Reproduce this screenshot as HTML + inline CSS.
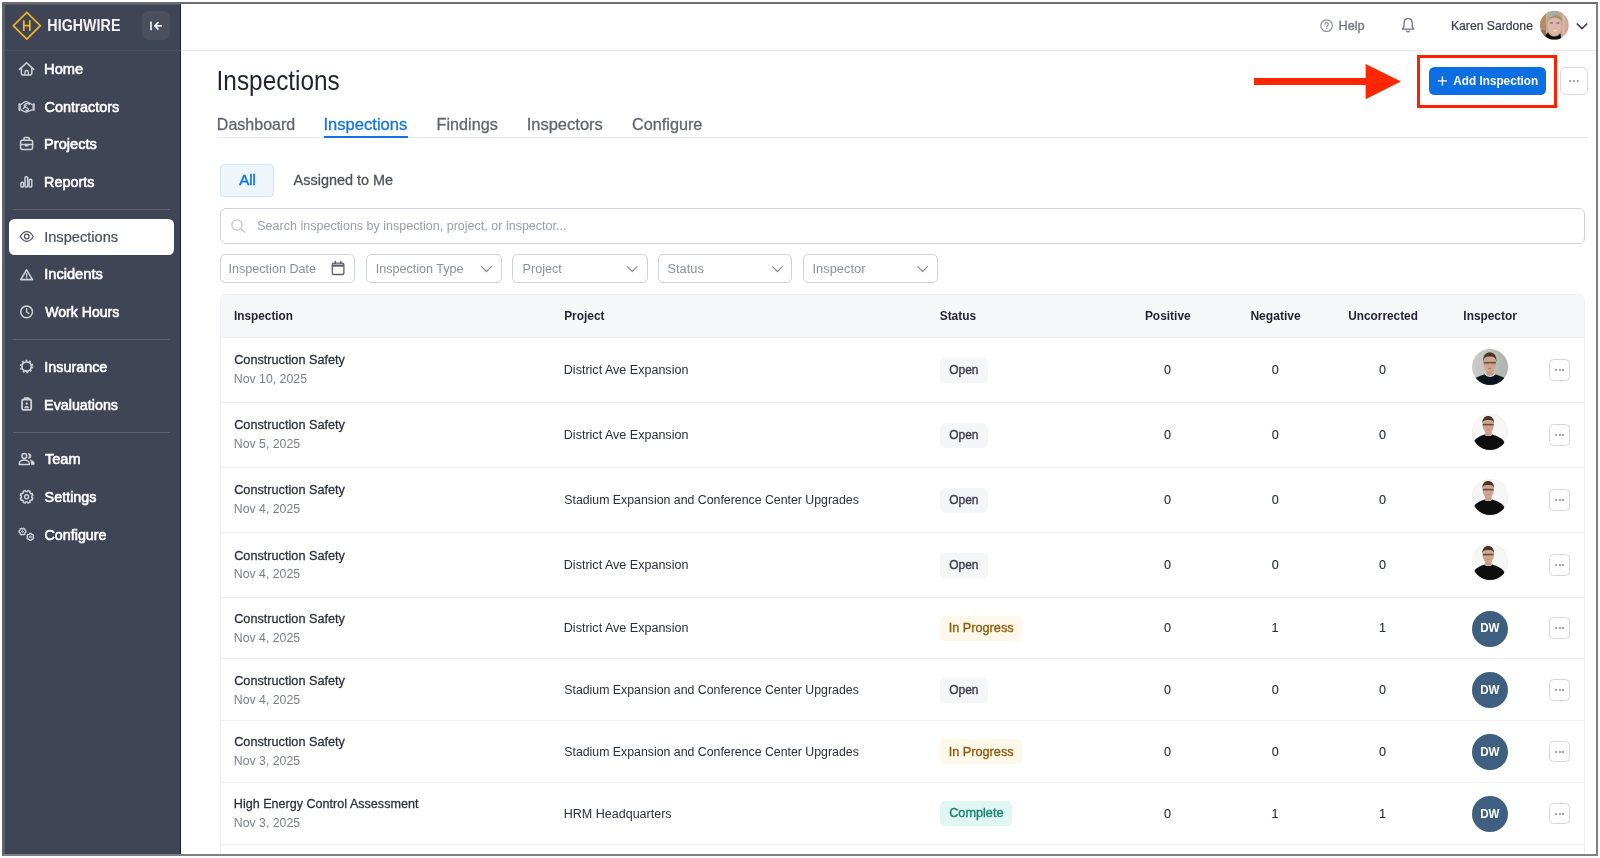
<!DOCTYPE html>
<html><head><meta charset="utf-8"><title>Inspections</title>
<style>
*{box-sizing:border-box;margin:0;padding:0}
html,body{width:1600px;height:858px;overflow:hidden;background:#fff;font-family:"Liberation Sans",sans-serif}
.abs,.t,svg,.rl,.bdg,.mb,.dw,.av{position:absolute}
.t{white-space:nowrap;line-height:1;transform-origin:0 50%}
#frame{left:2px;top:2px;width:1596px;height:854px;border:2px solid #7e7e7e;border-left-color:#636367;border-top-color:#6c6c6e}
#side{left:4px;top:4px;width:177px;height:850px;background:#404556;border-right:1px solid #16213f;border-top:1px solid #555969;border-left:1px solid #555969}
.hl{height:1px;background:#e9eaef}
.sdiv{left:12.5px;width:157.5px;height:1px;background:#5c6070}
.box{border:1px solid #cfd2dc;border-radius:5px;background:#fff}
.rl{left:221px;width:1363.6px;height:1px;background:#f0f1f4}
.bdg{height:25px;border-radius:5px}
.mb{left:1548.7px;width:21.8px;height:21.6px;border:1px solid #d5d8e2;border-radius:4.5px;background:#fff}
.mb i{position:absolute;top:9px;width:2px;height:2px;border-radius:50%;background:#868996}
.mb i:nth-child(1){left:5.5px}.mb i:nth-child(2){left:8.9px}.mb i:nth-child(3){left:12.3px}
.dw{left:1472px;width:36px;height:36px;border-radius:50%;background:#3f5f80}
.av{left:1472px}
svg{overflow:visible}
.si{fill:none;stroke:#cfd1d9;stroke-width:1.35;stroke-linecap:round;stroke-linejoin:round}
</style></head><body>
<!-- main chrome -->
<div class="abs" id="frame"></div>
<div class="abs" id="side"></div>
<div class="abs" style="left:5px;top:50px;width:176px;height:1px;background:#4a4f60"></div>
<div class="abs hl" style="left:181px;top:50px;width:1415px"></div>
<!-- sidebar dividers + active -->
<div class="abs sdiv" style="top:209px"></div>
<div class="abs sdiv" style="top:339px"></div>
<div class="abs sdiv" style="top:431.5px"></div>
<div class="abs" style="left:8.5px;top:218.5px;width:165.5px;height:36.5px;border-radius:5.5px;background:#fff"></div>
<!-- collapse btn -->
<div class="abs" style="left:142px;top:11px;width:28px;height:28.8px;border-radius:6.5px;background:#4b4e5d"></div>
<!-- tabs line -->
<div class="abs" style="left:217px;top:136.6px;width:1371px;height:1.8px;background:#e6e8ed"></div>
<div class="abs" style="left:324px;top:136px;width:83.5px;height:2.4px;background:#1273e6"></div>
<!-- chip -->
<div class="abs" style="left:220.3px;top:164px;width:53.4px;height:33px;border-radius:4px;background:#eef6fc;border:1px solid #d3e6f8"></div>
<!-- search -->
<div class="abs box" style="left:220.3px;top:208.2px;width:1364.4px;height:35.4px;border-radius:6px"></div>
<!-- filters -->
<div class="abs box" style="left:220.2px;top:254.2px;width:135px;height:28.5px"></div>
<div class="abs box" style="left:366px;top:254.2px;width:135.7px;height:28.5px"></div>
<div class="abs box" style="left:512.3px;top:254.2px;width:135.3px;height:28.5px"></div>
<div class="abs box" style="left:658px;top:254.2px;width:134px;height:28.5px"></div>
<div class="abs box" style="left:802.8px;top:254.2px;width:135.2px;height:28.5px"></div>
<!-- table -->
<div class="abs" style="left:220.3px;top:294.4px;width:1364.6px;height:559.6px;border:1px solid #eef0f3;border-bottom:none;border-radius:7px 7px 0 0;background:#fff;overflow:hidden"><div style="height:42.4px;background:#f6f7f9;border-bottom:1px solid #eff0f3"></div></div>
<div class="rl" style="top:401.60px"></div>
<div class="rl" style="top:466.60px"></div>
<div class="rl" style="top:531.60px"></div>
<div class="rl" style="top:596.60px"></div>
<div class="rl" style="top:658.35px"></div>
<div class="rl" style="top:720.10px"></div>
<div class="rl" style="top:781.85px"></div>
<div class="rl" style="top:843.60px"></div>
<div class="bdg" style="left:939.9px;top:357.60px;width:48.2px;background:#f4f5f7"></div>
<div class="mb" style="top:359.00px"><i></i><i></i><i></i></div>
<svg class="av" style="top:348.50px" width="36" height="36" viewBox="0 0 36 36"><defs><clipPath id="cp1"><circle cx="18" cy="18" r="18"/></clipPath><linearGradient id="g1" x1="0" x2="1"><stop offset="0" stop-color="#cbccc7"/><stop offset=".55" stop-color="#bfc1bb"/><stop offset="1" stop-color="#abb2ad"/></linearGradient><filter id="bl1"><feGaussianBlur stdDeviation=".5"/></filter></defs>
<g clip-path="url(#cp1)"><rect width="36" height="36" fill="url(#g1)"/><g filter="url(#bl1)">
<path d="M-2 38 V32 C3 28.5 8 27 13 25.2 C15.5 27.4 20.5 27.4 23 25.2 C28 27 33 28.5 38 32 V38Z" fill="#10151f"/>
<path d="M14.4 19 H21.6 V25 C20 27.2 16 27.2 14.4 25Z" fill="#c9987f"/>
<path d="M13 25 C15.2 28.2 20.8 28.2 23 25" fill="none" stroke="#e3e4e2" stroke-width="1.1"/>
<ellipse cx="17.8" cy="14.8" rx="6.3" ry="8.3" fill="#d3a48d"/>
<path d="M11.2 13.2 C10.6 6.8 13.8 3.2 17.8 3.2 C21.8 3.2 25 6.8 24.4 13.2 C24 9.2 22.3 7.4 17.8 7.6 C13.3 7.4 11.6 9.2 11.2 13.2Z" fill="#4b3425"/>
<path d="M11.6 13.6 H24" stroke="#463c3c" stroke-width="1.5" opacity=".75"/>
<path d="M12.4 14.4 h4.4 M19 14.4 h4.4" stroke="#5b5252" stroke-width="1.6" opacity=".35"/>
<path d="M16.2 19.4 H19.4" stroke="#b0645c" stroke-width=".9" opacity=".8"/>
</g></g>
</svg>
<div class="bdg" style="left:939.9px;top:422.60px;width:48.2px;background:#f4f5f7"></div>
<div class="mb" style="top:424.00px"><i></i><i></i><i></i></div>
<svg class="av" style="top:413.80px" width="36" height="36" viewBox="0 0 36 36"><defs><clipPath id="cp2"><circle cx="18" cy="18" r="18"/></clipPath><filter id="bl2"><feGaussianBlur stdDeviation=".5"/></filter></defs>
<circle cx="18" cy="18" r="18" fill="#e6f1eb"/><g clip-path="url(#cp2)"><circle cx="18" cy="18" r="17.4" fill="#f6f6f4"/><g filter="url(#bl2)">
<path d="M2 38 V28 C3.4 24 8 22.4 12.4 20.6 C14.4 22.6 18.4 22.6 20.4 20.6 C25 22.4 30.4 24 32.2 28 V38Z" fill="#0c0d11"/>
<path d="M13.2 15 H19.6 V20.6 C18.2 22.4 14.6 22.4 13.2 20.6Z" fill="#c79a83"/>
<ellipse cx="16.2" cy="11.4" rx="5.6" ry="7.6" fill="#d0a48e"/>
<path d="M10.4 10.2 C9.8 4.4 12.8 1.9 16.2 1.9 C19.6 1.9 22.6 4.4 22 10.2 C21.6 7 20.2 5.8 16.2 6 C12.2 5.8 10.8 7 10.4 10.2Z" fill="#4d3526"/>
<path d="M10.7 10.6 H21.7" stroke="#3f3838" stroke-width="1.6" opacity=".8"/>
<path d="M14.7 15.4 H17.7" stroke="#b0645c" stroke-width=".8" opacity=".7"/>
</g></g>
</svg>
<div class="bdg" style="left:939.9px;top:487.60px;width:48.2px;background:#f4f5f7"></div>
<div class="mb" style="top:489.00px"><i></i><i></i><i></i></div>
<svg class="av" style="top:478.80px" width="36" height="36" viewBox="0 0 36 36"><defs><clipPath id="cp2"><circle cx="18" cy="18" r="18"/></clipPath><filter id="bl2"><feGaussianBlur stdDeviation=".5"/></filter></defs>
<circle cx="18" cy="18" r="18" fill="#e6f1eb"/><g clip-path="url(#cp2)"><circle cx="18" cy="18" r="17.4" fill="#f6f6f4"/><g filter="url(#bl2)">
<path d="M2 38 V28 C3.4 24 8 22.4 12.4 20.6 C14.4 22.6 18.4 22.6 20.4 20.6 C25 22.4 30.4 24 32.2 28 V38Z" fill="#0c0d11"/>
<path d="M13.2 15 H19.6 V20.6 C18.2 22.4 14.6 22.4 13.2 20.6Z" fill="#c79a83"/>
<ellipse cx="16.2" cy="11.4" rx="5.6" ry="7.6" fill="#d0a48e"/>
<path d="M10.4 10.2 C9.8 4.4 12.8 1.9 16.2 1.9 C19.6 1.9 22.6 4.4 22 10.2 C21.6 7 20.2 5.8 16.2 6 C12.2 5.8 10.8 7 10.4 10.2Z" fill="#4d3526"/>
<path d="M10.7 10.6 H21.7" stroke="#3f3838" stroke-width="1.6" opacity=".8"/>
<path d="M14.7 15.4 H17.7" stroke="#b0645c" stroke-width=".8" opacity=".7"/>
</g></g>
</svg>
<div class="bdg" style="left:939.9px;top:552.60px;width:48.2px;background:#f4f5f7"></div>
<div class="mb" style="top:554.00px"><i></i><i></i><i></i></div>
<svg class="av" style="top:543.80px" width="36" height="36" viewBox="0 0 36 36"><defs><clipPath id="cp2"><circle cx="18" cy="18" r="18"/></clipPath><filter id="bl2"><feGaussianBlur stdDeviation=".5"/></filter></defs>
<circle cx="18" cy="18" r="18" fill="#e6f1eb"/><g clip-path="url(#cp2)"><circle cx="18" cy="18" r="17.4" fill="#f6f6f4"/><g filter="url(#bl2)">
<path d="M2 38 V28 C3.4 24 8 22.4 12.4 20.6 C14.4 22.6 18.4 22.6 20.4 20.6 C25 22.4 30.4 24 32.2 28 V38Z" fill="#0c0d11"/>
<path d="M13.2 15 H19.6 V20.6 C18.2 22.4 14.6 22.4 13.2 20.6Z" fill="#c79a83"/>
<ellipse cx="16.2" cy="11.4" rx="5.6" ry="7.6" fill="#d0a48e"/>
<path d="M10.4 10.2 C9.8 4.4 12.8 1.9 16.2 1.9 C19.6 1.9 22.6 4.4 22 10.2 C21.6 7 20.2 5.8 16.2 6 C12.2 5.8 10.8 7 10.4 10.2Z" fill="#4d3526"/>
<path d="M10.7 10.6 H21.7" stroke="#3f3838" stroke-width="1.6" opacity=".8"/>
<path d="M14.7 15.4 H17.7" stroke="#b0645c" stroke-width=".8" opacity=".7"/>
</g></g>
</svg>
<div class="bdg" style="left:939.9px;top:615.98px;width:82.0px;background:#fef8ea"></div>
<div class="mb" style="top:617.38px"><i></i><i></i><i></i></div>
<div class="dw" style="top:610.58px"></div>
<div class="bdg" style="left:939.9px;top:677.73px;width:48.2px;background:#f4f5f7"></div>
<div class="mb" style="top:679.12px"><i></i><i></i><i></i></div>
<div class="dw" style="top:672.33px"></div>
<div class="bdg" style="left:939.9px;top:739.48px;width:82.0px;background:#fef8ea"></div>
<div class="mb" style="top:740.88px"><i></i><i></i><i></i></div>
<div class="dw" style="top:734.08px"></div>
<div class="bdg" style="left:939.9px;top:801.23px;width:72.3px;background:#e0f6f3"></div>
<div class="mb" style="top:802.62px"><i></i><i></i><i></i></div>
<div class="dw" style="top:795.83px"></div>
<!-- annotation -->
<div class="abs" style="left:1254px;top:78.1px;width:113px;height:7.3px;background:#ff2600"></div>
<svg style="left:0;top:0" width="1600" height="120"><polygon points="1365.6,64 1400.9,81.6 1365.6,99.2" fill="#ff2600"/></svg>
<div class="abs" style="left:1416.7px;top:54.8px;width:140.5px;height:52.9px;border:3.2px solid #ff2000"></div>
<div class="abs" style="left:1429px;top:66.9px;width:116.6px;height:27.9px;border-radius:5.5px;background:#0b6fe3"></div>
<div class="abs" style="left:1560.2px;top:66.6px;width:27.6px;height:28.2px;border-radius:6px;border:1px solid #d5d8e2;background:#fff"></div>
<svg style="left:0;top:0" width="1600" height="858" viewBox="0 0 1600 858">
<g fill="none" stroke="#f0b429" stroke-linejoin="miter">
<path d="M26.8 12.4 L40.3 25.7 L26.8 39 L13.3 25.7 Z" stroke-width="1.7"/>
<path d="M23.8 20.2 V31.1 M29.8 20.2 V31.1 M23.8 25.7 H29.8" stroke-width="1.8"/>
</g>
<g fill="none" stroke="#f0f0f3" stroke-width="1.7" stroke-linecap="round" stroke-linejoin="round"><path d="M151 21.6 V30.3" stroke-linecap="butt"/><path d="M161.2 25.9 H155 M158 22.7 L154.8 25.9 L158 29.1"/></g>
<g class="si">
<path d="M19.5 69.4 L26.6 62.7 L33.7 69.4" stroke-width="1.5"/><path d="M21.4 68.2 V73.4 Q21.4 74.9 22.9 74.9 H30.3 Q31.8 74.9 31.8 73.4 V68.2" stroke-width="1.5"/><path d="M24.9 74.6 V72.2 Q24.9 70.5 26.6 70.5 Q28.3 70.5 28.3 72.2 V74.6" stroke-width="1.3"/>
<rect x="18.4" y="103.3" width="2.4" height="7.7" rx=".9" fill="#c6c8d0" stroke="none"/><rect x="32.4" y="103.3" width="2.4" height="7.7" rx=".9" fill="#c6c8d0" stroke="none"/>
<path d="M21.2 104.4 C22.6 103.6 23.4 101.8 25.8 101.7 C28.6 101.6 30 103.8 32 104.4 M21.2 109.8 C22.4 110.4 23.6 112 26 112 C28.6 112 30.4 110.4 32 109.8" stroke-width="1.3"/>
<path d="M29.4 104.2 C27.6 102.8 24.6 103.6 24.2 105.8 C23.8 108 27 107.4 28 108.6 C29 109.8 27.4 111 25.8 110.2" stroke-width="1.3"/>
<path d="M23.2 108.6 L26.2 105.4" stroke-width="1.2"/>
<rect x="20.6" y="140.2" width="12" height="9.2" rx="1.6" stroke-width="1.55"/><path d="M24 140.2 V138.7 a1.1 1.1 0 0 1 1.1 -1.1 h3 a1.1 1.1 0 0 1 1.1 1.1 V140.2" stroke-width="1.55"/><path d="M20.6 144.4 H32.6" stroke-width="1.5"/><path d="M25.5 144.4 v1.3 h2.4 v-1.3"/>
<rect x="20.9" y="182.3" width="2.7" height="4.8" rx="1.2" stroke-width="1.5"/><rect x="25" y="176.8" width="2.7" height="10.3" rx="1.2" stroke-width="1.5"/><rect x="29.1" y="179.2" width="2.7" height="7.9" rx="1.2" stroke-width="1.5"/>
<path d="M26.6 269.8 L32.5 279.6 H20.7 Z" stroke-width="1.6"/><path d="M26.6 273.6 V276.4"/><path d="M26.6 278 V278.1" stroke-width="1.5"/>
<circle cx="26.6" cy="311.8" r="5.9" stroke-width="1.5"/><path d="M26.6 308.4 V312 L28.8 313.5"/>
<circle cx="26.6" cy="366.5" r="4.7" stroke-width="1.7"/><circle cx="26.6" cy="366.5" r="6" stroke-width="1.5" stroke-dasharray="1.9 1.87" stroke-linecap="butt"/>
<rect x="22.1" y="399.5" width="9.1" height="10.4" rx="1.3" stroke-width="1.8"/><path d="M24.7 399 V398.2 H28.6 V399" stroke-width="1.8"/><circle cx="26.65" cy="403.6" r="1.1" fill="#d9dbe2" stroke="none"/><path d="M24.5 407.7 c0.3 -2 4 -2 4.3 0 z" fill="#d9dbe2" stroke-width="0.6"/>
<circle cx="24.3" cy="456" r="2.4" stroke-width="1.5"/><path d="M19.3 464.4 V463.2 c0 -2.3 3.4 -3.3 5 -3.3 s5 1 5 3.3 v1.2 z" stroke-width="1.5"/>
<path d="M28.6 453.6 a2.4 2.4 0 0 1 0 4.8 a4 4 0 0 0 0 -4.8z M30.8 460.2 c2 .5 3.4 1.5 3.4 3 v1.2 h-2.9 v-1.2 c0 -1.2 -.2 -2.1 -.5 -3z" fill="#d9dbe2" stroke-width="0.8"/>
<path d="M32.85 498.20 L32.00 500.23 L30.89 499.92 L29.72 501.09 L30.03 502.20 L28.00 503.05 L27.43 502.03 L25.77 502.03 L25.20 503.05 L23.17 502.20 L23.48 501.09 L22.31 499.92 L21.20 500.23 L20.35 498.20 L21.37 497.63 L21.37 495.97 L20.35 495.40 L21.20 493.37 L22.31 493.68 L23.48 492.51 L23.17 491.40 L25.20 490.55 L25.77 491.57 L27.43 491.57 L28.00 490.55 L30.03 491.40 L29.72 492.51 L30.89 493.68 L32.00 493.37 L32.85 495.40 L31.83 495.97 L31.83 497.63Z" stroke-width="1.5"/><circle cx="26.6" cy="496.8" r="2" stroke-width="1.4"/>
<path d="M25.91 530.80 L25.91 532.40 L25.26 532.50 L24.66 533.54 L24.90 534.15 L23.51 534.95 L23.10 534.44 L21.90 534.44 L21.49 534.95 L20.10 534.15 L20.34 533.54 L19.74 532.50 L19.09 532.40 L19.09 530.80 L19.74 530.70 L20.34 529.66 L20.10 529.05 L21.49 528.25 L21.90 528.76 L23.10 528.76 L23.51 528.25 L24.90 529.05 L24.66 529.66 L25.26 530.70Z" stroke-width="1.3"/><circle cx="22.5" cy="531.6" r=".9" stroke-width="1"/>
<path d="M33.65 537.91 L32.85 539.30 L32.24 539.06 L31.20 539.66 L31.10 540.31 L29.50 540.31 L29.40 539.66 L28.36 539.06 L27.75 539.30 L26.95 537.91 L27.46 537.50 L27.46 536.30 L26.95 535.89 L27.75 534.50 L28.36 534.74 L29.40 534.14 L29.50 533.49 L31.10 533.49 L31.20 534.14 L32.24 534.74 L32.85 534.50 L33.65 535.89 L33.14 536.30 L33.14 537.50Z" stroke-width="1.3"/><circle cx="30.3" cy="536.9" r=".9" stroke-width="1"/>
</g>
<g fill="none" stroke="#535665" stroke-width="1.3" stroke-linejoin="round"><path d="M20.3 236.5 C22.4 232.8 24.8 231.7 26.75 231.7 C28.7 231.7 31.1 232.8 33.2 236.5 C31.1 240.2 28.7 241.3 26.75 241.3 C24.8 241.3 22.4 240.2 20.3 236.5 Z"/><circle cx="26.75" cy="236.5" r="2.3"/></g>
<circle cx="1326.6" cy="25.6" r="5.8" fill="none" stroke="#8d909c" stroke-width="1.2"/>
<path d="M1325 24.3 c0 -2.2 3.3 -2.2 3.3 -.1 c0 1.3 -1.6 1.4 -1.6 2.7 M1326.7 28.6 v.1" fill="none" stroke="#8d909c" stroke-width="1.15" stroke-linecap="round"/>
<g fill="none" stroke="#6f7280" stroke-width="1.3" stroke-linejoin="round" stroke-linecap="round"><path d="M1408.1 18.7 c-2.6 0 -4.1 2 -4.1 4.5 v3.4 l-1.5 2.5 h11.2 l-1.5 -2.5 v-3.4 c0 -2.5 -1.5 -4.5 -4.1 -4.5 z"/><path d="M1406.7 30.9 a1.5 1.5 0 0 0 2.8 0"/></g>
<defs><clipPath id="cpk"><circle cx="1554.4" cy="25.2" r="14.4"/></clipPath><linearGradient id="gk" x1="0" x2="1"><stop offset="0" stop-color="#b38468"/><stop offset=".19" stop-color="#b88a72"/><stop offset=".215" stop-color="#d2bb78"/><stop offset=".25" stop-color="#c4a98a"/><stop offset=".76" stop-color="#c9a794"/><stop offset=".8" stop-color="#dcbcad"/><stop offset=".9" stop-color="#cfa593"/><stop offset="1" stop-color="#d9b6a6"/></linearGradient><filter id="blk" x="-20%" y="-20%" width="140%" height="140%"><feGaussianBlur stdDeviation=".45"/></filter></defs>
<g clip-path="url(#cpk)"><rect x="1540" y="10" width="29" height="30" fill="url(#gk)"/><g filter="url(#blk)">
<path d="M1540 40 V30 H1546 V40Z" fill="#9c6c52"/>
<path d="M1546.6 32 C1545 17 1549.5 10.6 1555 10.6 C1560.5 10.6 1563.6 16 1562.6 27 L1560 18 L1549 20Z" fill="#b4a98f"/>
<path d="M1548 16 C1549.5 11.5 1553.5 10.4 1556.5 11 L1554 17Z" fill="#9db2b8"/>
<ellipse cx="1554.4" cy="26.2" rx="7" ry="9" fill="#deb7a8"/>
<path d="M1548 21.5 C1550.5 17 1555 15.8 1562 20.5 C1561 14 1552.5 12.5 1548 21.5Z" fill="#a88c62"/>
<path d="M1550 23 H1553 M1556.4 23 H1559.4" stroke="#5e5458" stroke-width="1.2"/>
<path d="M1552.4 30.2 C1553.6 31.7 1556.2 31.7 1557.4 30.2Z" fill="#f1e8e4"/>
<path d="M1544.5 41 C1544.5 36 1546.2 33.2 1548 32.4 C1550.6 37.6 1557.6 37.8 1560.2 33.6 C1561.2 35.5 1561 38 1561 41Z" fill="#0a0b11"/>
</g></g>
<path d="M1577.2 23.9 L1582 28.6 L1586.8 23.9" fill="none" stroke="#41444f" stroke-width="1.5" stroke-linecap="round" stroke-linejoin="round"/>
<g fill="none" stroke="#c2c4ce" stroke-width="1.2" stroke-linecap="round"><circle cx="237" cy="225" r="5.1"/><path d="M240.8 228.8 L244.6 232.3"/></g>
<g fill="none" stroke="#585b6a" stroke-width="1.3" stroke-linejoin="round"><rect x="332.3" y="263.2" width="11.6" height="11.3" rx="1.6"/><path d="M332.3 265.6 H343.9" stroke-width="2.2"/><path d="M335.3 261.5 V263.4 M340.9 261.5 V263.4" stroke-linecap="round" stroke-width="1.4"/></g>
<path d="M481.6 266.6 L486.5 271.5 L491.4 266.6" fill="none" stroke="#8d909c" stroke-width="1.2" stroke-linecap="round" stroke-linejoin="round"/>
<path d="M627.3000000000001 266.6 L632.2 271.5 L637.1 266.6" fill="none" stroke="#8d909c" stroke-width="1.2" stroke-linecap="round" stroke-linejoin="round"/>
<path d="M772.5 266.6 L777.4 271.5 L782.3 266.6" fill="none" stroke="#8d909c" stroke-width="1.2" stroke-linecap="round" stroke-linejoin="round"/>
<path d="M917.7 266.6 L922.6 271.5 L927.5 266.6" fill="none" stroke="#8d909c" stroke-width="1.2" stroke-linecap="round" stroke-linejoin="round"/>
<path d="M1442.4 76.3 V85.5 M1437.8 80.9 H1447" fill="none" stroke="#fff" stroke-width="1.35" stroke-linecap="butt"/>
<circle cx="1570.2" cy="80.9" r="1" fill="#868996"/>
<circle cx="1574" cy="80.9" r="1" fill="#868996"/>
<circle cx="1577.8" cy="80.9" r="1" fill="#868996"/>
</svg>
<svg style="left:0;top:0;will-change:transform" width="1600" height="858" font-family="Liberation Sans, sans-serif">
<text transform="translate(44.07,74) scale(0.9600,1)" font-size="15.3" fill="#fff" stroke="#fff" stroke-width="0.6">Home</text>
<text transform="translate(44.53,112) scale(0.9463,1)" font-size="15.3" fill="#fff" stroke="#fff" stroke-width="0.6">Contractors</text>
<text transform="translate(44.08,149) scale(0.9550,1)" font-size="15.3" fill="#fff" stroke="#fff" stroke-width="0.6">Projects</text>
<text transform="translate(44.10,187) scale(0.9380,1)" font-size="15.3" fill="#fff" stroke="#fff" stroke-width="0.6">Reports</text>
<text transform="translate(44.18,242) scale(0.9552,1)" font-size="15.3" fill="#4d505f" stroke="#4d505f" stroke-width="0.25">Inspections</text>
<text transform="translate(44.18,279) scale(0.9574,1)" font-size="15.3" fill="#fff" stroke="#fff" stroke-width="0.6">Incidents</text>
<text transform="translate(45.25,317) scale(0.9206,1)" font-size="15.3" fill="#fff" stroke="#fff" stroke-width="0.6">Work Hours</text>
<text transform="translate(44.21,372) scale(0.9404,1)" font-size="15.3" fill="#fff" stroke="#fff" stroke-width="0.6">Insurance</text>
<text transform="translate(44.11,410) scale(0.9342,1)" font-size="15.3" fill="#fff" stroke="#fff" stroke-width="0.6">Evaluations</text>
<text transform="translate(44.96,464) scale(0.9545,1)" font-size="15.3" fill="#fff" stroke="#fff" stroke-width="0.6">Team</text>
<text transform="translate(44.60,502) scale(0.9388,1)" font-size="15.3" fill="#fff" stroke="#fff" stroke-width="0.6">Settings</text>
<text transform="translate(44.53,540) scale(0.9354,1)" font-size="15.3" fill="#fff" stroke="#fff" stroke-width="0.6">Configure</text>
<text transform="translate(47.37,31) scale(0.8770,1)" font-size="16.3" fill="#f4f4f7" font-weight="bold">HIGHWIRE</text>
<text transform="translate(1338.59,30) scale(0.9518,1)" font-size="13.3" fill="#747783" stroke="#747783" stroke-width="0.4">Help</text>
<text transform="translate(1450.92,30) scale(0.9174,1)" font-size="13.3" fill="#3a3d4c" stroke="#3a3d4c" stroke-width="0.25">Karen Sardone</text>
<text transform="translate(216.61,90) scale(0.8941,1)" font-size="27.25" fill="#1f2333">Inspections</text>
<text transform="translate(216.87,130) scale(0.9962,1)" font-size="16.1" fill="#62656f" stroke="#62656f" stroke-width="0.3">Dashboard</text>
<text transform="translate(323.51,130) scale(1.0286,1)" font-size="16.1" fill="#1273e6" stroke="#1273e6" stroke-width="0.3">Inspections</text>
<text transform="translate(436.61,130) scale(1.0050,1)" font-size="16.1" fill="#62656f" stroke="#62656f" stroke-width="0.3">Findings</text>
<text transform="translate(526.66,130) scale(1.0268,1)" font-size="16.1" fill="#62656f" stroke="#62656f" stroke-width="0.3">Inspectors</text>
<text transform="translate(631.99,130) scale(1.0096,1)" font-size="16.1" fill="#62656f" stroke="#62656f" stroke-width="0.3">Configure</text>
<text transform="translate(239.20,185) scale(1.0245,1)" font-size="14.7" fill="#1273e6" stroke="#1273e6" stroke-width="0.45">All</text>
<text transform="translate(293.60,185) scale(0.9897,1)" font-size="14.6" fill="#50535f" stroke="#50535f" stroke-width="0.3">Assigned to Me</text>
<text transform="translate(257.24,230) scale(0.9150,1)" font-size="13.7" fill="#9a9dab">Search inspections by inspection, project, or inspector...</text>
<text transform="translate(228.46,273) scale(0.9208,1)" font-size="13.7" fill="#8d909c">Inspection Date</text>
<text transform="translate(375.67,273) scale(0.9186,1)" font-size="13.7" fill="#8d909c">Inspection Type</text>
<text transform="translate(522.59,273) scale(0.9204,1)" font-size="13.7" fill="#8d909c">Project</text>
<text transform="translate(667.52,273) scale(0.9353,1)" font-size="13.7" fill="#8d909c">Status</text>
<text transform="translate(812.44,273) scale(0.9428,1)" font-size="13.7" fill="#8d909c">Inspector</text>
<text transform="translate(1453.36,85) scale(0.8778,1)" font-size="13.4" fill="#fff" font-weight="bold">Add Inspection</text>
<text transform="translate(234.03,320) scale(0.9074,1)" font-size="13.0" fill="#1f2333" font-weight="bold">Inspection</text>
<text transform="translate(564.13,320) scale(0.9160,1)" font-size="13.0" fill="#1f2333" font-weight="bold">Project</text>
<text transform="translate(939.70,320) scale(0.9169,1)" font-size="13.0" fill="#1f2333" font-weight="bold">Status</text>
<text transform="translate(1144.92,320) scale(0.9176,1)" font-size="13.0" fill="#1f2333" font-weight="bold">Positive</text>
<text transform="translate(1250.41,320) scale(0.9294,1)" font-size="13.0" fill="#1f2333" font-weight="bold">Negative</text>
<text transform="translate(1348.29,320) scale(0.9100,1)" font-size="13.0" fill="#1f2333" font-weight="bold">Uncorrected</text>
<text transform="translate(1463.33,320) scale(0.9150,1)" font-size="13.0" fill="#1f2333" font-weight="bold">Inspector</text>
<text transform="translate(234.16,364) scale(0.9550,1)" font-size="13.3" fill="#2b2e3d" stroke="#2b2e3d" stroke-width="0.27">Construction Safety</text>
<text transform="translate(233.81,383) scale(0.9264,1)" font-size="13.3" fill="#7c7f8c">Nov 10, 2025</text>
<text transform="translate(563.80,374) scale(0.9440,1)" font-size="13.3" fill="#2b2e3d">District Ave Expansion</text>
<text transform="translate(949.26,374) scale(0.8996,1)" font-size="13.3" fill="#3a3d4c" stroke="#3a3d4c" stroke-width="0.38">Open</text>
<text transform="translate(1163.99,374) scale(0.9500,1)" font-size="13.3" fill="#2b2e3d" stroke="#2b2e3d" stroke-width="0.12">0</text>
<text transform="translate(1271.79,374) scale(0.9500,1)" font-size="13.3" fill="#2b2e3d" stroke="#2b2e3d" stroke-width="0.12">0</text>
<text transform="translate(1379.09,374) scale(0.9500,1)" font-size="13.3" fill="#2b2e3d" stroke="#2b2e3d" stroke-width="0.12">0</text>
<text transform="translate(234.16,429) scale(0.9550,1)" font-size="13.3" fill="#2b2e3d" stroke="#2b2e3d" stroke-width="0.27">Construction Safety</text>
<text transform="translate(233.82,448) scale(0.9243,1)" font-size="13.3" fill="#7c7f8c">Nov 5, 2025</text>
<text transform="translate(563.80,439) scale(0.9440,1)" font-size="13.3" fill="#2b2e3d">District Ave Expansion</text>
<text transform="translate(949.26,439) scale(0.8996,1)" font-size="13.3" fill="#3a3d4c" stroke="#3a3d4c" stroke-width="0.38">Open</text>
<text transform="translate(1163.99,439) scale(0.9500,1)" font-size="13.3" fill="#2b2e3d" stroke="#2b2e3d" stroke-width="0.12">0</text>
<text transform="translate(1271.79,439) scale(0.9500,1)" font-size="13.3" fill="#2b2e3d" stroke="#2b2e3d" stroke-width="0.12">0</text>
<text transform="translate(1379.09,439) scale(0.9500,1)" font-size="13.3" fill="#2b2e3d" stroke="#2b2e3d" stroke-width="0.12">0</text>
<text transform="translate(234.16,494) scale(0.9550,1)" font-size="13.3" fill="#2b2e3d" stroke="#2b2e3d" stroke-width="0.27">Construction Safety</text>
<text transform="translate(233.82,513) scale(0.9243,1)" font-size="13.3" fill="#7c7f8c">Nov 4, 2025</text>
<text transform="translate(564.24,504) scale(0.9276,1)" font-size="13.3" fill="#2b2e3d">Stadium Expansion and Conference Center Upgrades</text>
<text transform="translate(949.26,504) scale(0.8996,1)" font-size="13.3" fill="#3a3d4c" stroke="#3a3d4c" stroke-width="0.38">Open</text>
<text transform="translate(1163.99,504) scale(0.9500,1)" font-size="13.3" fill="#2b2e3d" stroke="#2b2e3d" stroke-width="0.12">0</text>
<text transform="translate(1271.79,504) scale(0.9500,1)" font-size="13.3" fill="#2b2e3d" stroke="#2b2e3d" stroke-width="0.12">0</text>
<text transform="translate(1379.09,504) scale(0.9500,1)" font-size="13.3" fill="#2b2e3d" stroke="#2b2e3d" stroke-width="0.12">0</text>
<text transform="translate(234.16,560) scale(0.9550,1)" font-size="13.3" fill="#2b2e3d" stroke="#2b2e3d" stroke-width="0.27">Construction Safety</text>
<text transform="translate(233.82,578) scale(0.9243,1)" font-size="13.3" fill="#7c7f8c">Nov 4, 2025</text>
<text transform="translate(563.80,569) scale(0.9440,1)" font-size="13.3" fill="#2b2e3d">District Ave Expansion</text>
<text transform="translate(949.26,569) scale(0.8996,1)" font-size="13.3" fill="#3a3d4c" stroke="#3a3d4c" stroke-width="0.38">Open</text>
<text transform="translate(1163.99,569) scale(0.9500,1)" font-size="13.3" fill="#2b2e3d" stroke="#2b2e3d" stroke-width="0.12">0</text>
<text transform="translate(1271.79,569) scale(0.9500,1)" font-size="13.3" fill="#2b2e3d" stroke="#2b2e3d" stroke-width="0.12">0</text>
<text transform="translate(1379.09,569) scale(0.9500,1)" font-size="13.3" fill="#2b2e3d" stroke="#2b2e3d" stroke-width="0.12">0</text>
<text transform="translate(234.16,623) scale(0.9550,1)" font-size="13.3" fill="#2b2e3d" stroke="#2b2e3d" stroke-width="0.27">Construction Safety</text>
<text transform="translate(233.82,642) scale(0.9243,1)" font-size="13.3" fill="#7c7f8c">Nov 4, 2025</text>
<text transform="translate(563.80,632) scale(0.9440,1)" font-size="13.3" fill="#2b2e3d">District Ave Expansion</text>
<text transform="translate(948.66,632) scale(0.9556,1)" font-size="13.3" fill="#8c5d10" stroke="#8c5d10" stroke-width="0.38">In Progress</text>
<text transform="translate(1163.99,632) scale(0.9500,1)" font-size="13.3" fill="#2b2e3d" stroke="#2b2e3d" stroke-width="0.12">0</text>
<text transform="translate(1271.60,632) scale(0.9500,1)" font-size="13.3" fill="#2b2e3d" stroke="#2b2e3d" stroke-width="0.12">1</text>
<text transform="translate(1378.90,632) scale(0.9500,1)" font-size="13.3" fill="#2b2e3d" stroke="#2b2e3d" stroke-width="0.12">1</text>
<text transform="translate(1480.15,632) scale(0.8664,1)" font-size="13.4" fill="#fff" font-weight="bold">DW</text>
<text transform="translate(234.16,685) scale(0.9550,1)" font-size="13.3" fill="#2b2e3d" stroke="#2b2e3d" stroke-width="0.27">Construction Safety</text>
<text transform="translate(233.82,704) scale(0.9243,1)" font-size="13.3" fill="#7c7f8c">Nov 4, 2025</text>
<text transform="translate(564.24,694) scale(0.9276,1)" font-size="13.3" fill="#2b2e3d">Stadium Expansion and Conference Center Upgrades</text>
<text transform="translate(949.26,694) scale(0.8996,1)" font-size="13.3" fill="#3a3d4c" stroke="#3a3d4c" stroke-width="0.38">Open</text>
<text transform="translate(1163.99,694) scale(0.9500,1)" font-size="13.3" fill="#2b2e3d" stroke="#2b2e3d" stroke-width="0.12">0</text>
<text transform="translate(1271.79,694) scale(0.9500,1)" font-size="13.3" fill="#2b2e3d" stroke="#2b2e3d" stroke-width="0.12">0</text>
<text transform="translate(1379.09,694) scale(0.9500,1)" font-size="13.3" fill="#2b2e3d" stroke="#2b2e3d" stroke-width="0.12">0</text>
<text transform="translate(1480.15,694) scale(0.8664,1)" font-size="13.4" fill="#fff" font-weight="bold">DW</text>
<text transform="translate(234.16,746) scale(0.9550,1)" font-size="13.3" fill="#2b2e3d" stroke="#2b2e3d" stroke-width="0.27">Construction Safety</text>
<text transform="translate(233.82,765) scale(0.9243,1)" font-size="13.3" fill="#7c7f8c">Nov 3, 2025</text>
<text transform="translate(564.24,756) scale(0.9276,1)" font-size="13.3" fill="#2b2e3d">Stadium Expansion and Conference Center Upgrades</text>
<text transform="translate(948.66,756) scale(0.9556,1)" font-size="13.3" fill="#8c5d10" stroke="#8c5d10" stroke-width="0.38">In Progress</text>
<text transform="translate(1163.99,756) scale(0.9500,1)" font-size="13.3" fill="#2b2e3d" stroke="#2b2e3d" stroke-width="0.12">0</text>
<text transform="translate(1271.79,756) scale(0.9500,1)" font-size="13.3" fill="#2b2e3d" stroke="#2b2e3d" stroke-width="0.12">0</text>
<text transform="translate(1379.09,756) scale(0.9500,1)" font-size="13.3" fill="#2b2e3d" stroke="#2b2e3d" stroke-width="0.12">0</text>
<text transform="translate(1480.15,756) scale(0.8664,1)" font-size="13.4" fill="#fff" font-weight="bold">DW</text>
<text transform="translate(233.79,808) scale(0.9472,1)" font-size="13.3" fill="#2b2e3d" stroke="#2b2e3d" stroke-width="0.27">High Energy Control Assessment</text>
<text transform="translate(233.82,827) scale(0.9243,1)" font-size="13.3" fill="#7c7f8c">Nov 3, 2025</text>
<text transform="translate(563.80,818) scale(0.9413,1)" font-size="13.3" fill="#2b2e3d">HRM Headquarters</text>
<text transform="translate(949.16,817) scale(0.9550,1)" font-size="13.3" fill="#1a8270" stroke="#1a8270" stroke-width="0.38">Complete</text>
<text transform="translate(1163.99,818) scale(0.9500,1)" font-size="13.3" fill="#2b2e3d" stroke="#2b2e3d" stroke-width="0.12">0</text>
<text transform="translate(1271.60,818) scale(0.9500,1)" font-size="13.3" fill="#2b2e3d" stroke="#2b2e3d" stroke-width="0.12">1</text>
<text transform="translate(1378.90,818) scale(0.9500,1)" font-size="13.3" fill="#2b2e3d" stroke="#2b2e3d" stroke-width="0.12">1</text>
<text transform="translate(1480.15,818) scale(0.8664,1)" font-size="13.4" fill="#fff" font-weight="bold">DW</text>
</svg>
</body></html>
